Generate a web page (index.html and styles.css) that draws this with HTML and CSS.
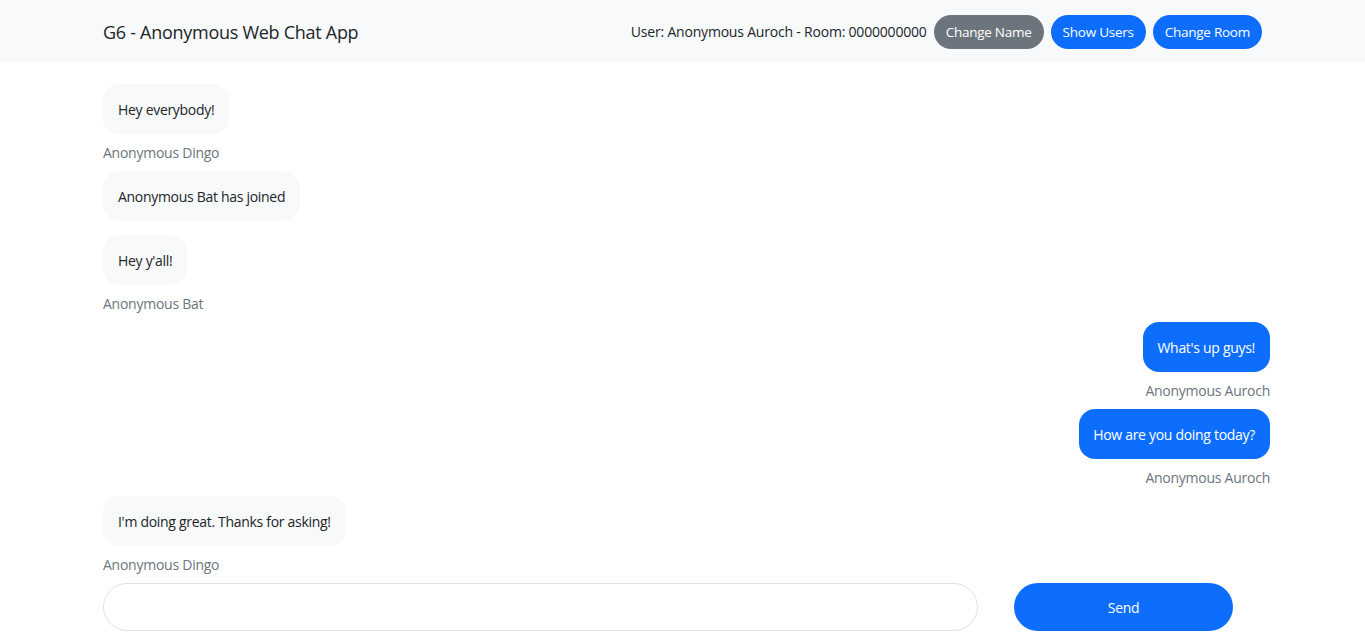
FILE: index.html
```html
<!DOCTYPE html>
<html lang="en">
<head>
<meta charset="utf-8">
<title>G6 - Anonymous Web Chat App</title>
<link rel="stylesheet" href="styles.css">
</head>
<body>
<nav class="navbar">
  <div class="nav-inner">
    <span class="brand">G6 - Anonymous Web Chat App</span>
    <div class="nav-right">
      <span class="user-info">User: Anonymous Auroch - Room: 0000000000</span>
      <button class="btn btn-gray">Change Name</button>
      <button class="btn btn-blue">Show Users</button>
      <button class="btn btn-blue">Change Room</button>
    </div>
  </div>
</nav>
<main class="chat">
  <div class="msg left">
    <div class="bubble">Hey everybody!</div>
    <div class="name">Anonymous Dingo</div>
  </div>
  <div class="msg left system">
    <div class="bubble">Anonymous Bat has joined</div>
  </div>
  <div class="msg left">
    <div class="bubble">Hey y'all!</div>
    <div class="name">Anonymous Bat</div>
  </div>
  <div class="msg right">
    <div class="bubble">What's up guys!</div>
    <div class="name">Anonymous Auroch</div>
  </div>
  <div class="msg right">
    <div class="bubble">How are you doing today?</div>
    <div class="name">Anonymous Auroch</div>
  </div>
  <div class="msg left">
    <div class="bubble">I'm doing great. Thanks for asking!</div>
    <div class="name">Anonymous Dingo</div>
  </div>
  <form class="composer">
    <input class="input" type="text">
    <button class="send" type="button">Send</button>
  </form>
</main>
</body>
</html>
```

FILE: styles.css
```css
* { box-sizing: border-box; }
body {
  margin: 0;
  font-family: "Open Sans", "Noto Sans", sans-serif;
  color: #212529;
  background: #fff;
}
.navbar {
  background: #f8f9fa;
  height: 63px;
}
.nav-inner {
  height: 100%;
  padding: 0 103px;
  display: flex;
  align-items: center;
  justify-content: space-between;
}
.brand {
  font-size: 18px;
  letter-spacing: -0.28px;
  color: #212529;
}
.nav-right {
  display: flex;
  align-items: center;
  gap: 7px;
}
.user-info {
  font-size: 14px;
  letter-spacing: -0.2px;
}
.btn {
  font-family: inherit;
  font-size: 13.5px;
  letter-spacing: -0.25px;
  color: #fff;
  border: none;
  border-radius: 17px;
  height: 34px;
  padding: 0 12px;
}
.btn-gray { background: #6c757d; }
.btn-blue { background: #0d6efd; }

.chat {
  padding: 21px 95px 0 103px;
}
.msg {
  display: flex;
  flex-direction: column;
  align-items: flex-start;
}
.msg.right { align-items: flex-end; }
.bubble {
  background: #f8f9fa;
  border-radius: 16px;
  height: 50px;
  display: flex;
  align-items: center;
  padding: 0 15px;
  font-size: 14px;
  letter-spacing: -0.3px;
}
.msg.right .bubble {
  background: #0d6efd;
  color: #fff;
  padding: 0 15px 0 14px;
}
.name {
  color: #6c757d;
  font-size: 14px;
  letter-spacing: -0.25px;
  line-height: 21px;
  margin: 8px 0 8px;
}
.msg.system { margin-bottom: 14px; }
.composer {
  display: grid;
  grid-template-columns: 875px 219px;
  column-gap: 36px;
  margin: 0;
}
.input {
  height: 48px;
  border: 1px solid #dee2e6;
  border-radius: 24px;
  font-family: inherit;
  outline: none;
  padding: 0 16px;
}
.send {
  height: 48px;
  border: none;
  border-radius: 24px;
  background: #0d6efd;
  color: #fff;
  font-family: inherit;
  font-size: 14px;
  letter-spacing: -0.3px;
}
```
